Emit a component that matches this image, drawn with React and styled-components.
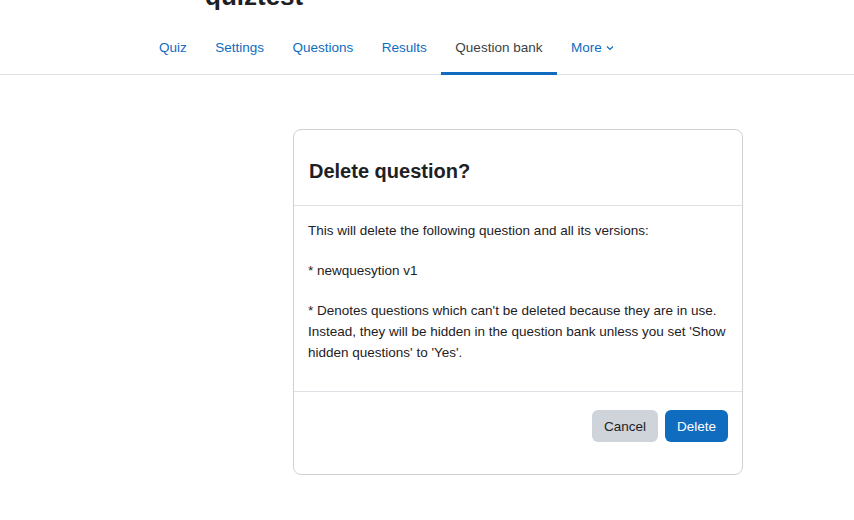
import React from 'react';
import styled, { createGlobalStyle } from 'styled-components';

const GlobalStyle = createGlobalStyle`
  html, body {
    margin: 0;
    padding: 0;
    background: #fff;
  }
  body {
    font-family: 'Liberation Sans', Arial, sans-serif;
    color: #1d2125;
    overflow: hidden;
  }
`;

const tabs = ['Quiz', 'Settings', 'Questions', 'Results', 'Question bank'];

function App() {
  return (
    <>
      <GlobalStyle />
      <Page>
        <Header>
          <Title>quiztest</Title>
        </Header>

        <Nav>
          <TabList>
            {tabs.map((t) => (
              <Tab key={t} active={t === 'Question bank'}>
                {t}
              </Tab>
            ))}
            <Tab>
              More
              <svg width='8' height='6' viewBox='0 0 8 6'>
                <path d='M1 1.5 L4 4.5 L7 1.5' fill='none' stroke='currentColor' strokeWidth='1.2' />
              </svg>
            </Tab>
          </TabList>
        </Nav>

        <Main>
          <Dialog>
            <DialogHeader>
              <DialogTitle>Delete question?</DialogTitle>
            </DialogHeader>
            <DialogBody>
              <p>This will delete the following question and all its versions:</p>
              <p>* newquesytion v1</p>
              <p>
                * Denotes questions which can't be deleted because they are in use.
                Instead, they will be hidden in the question bank unless you set 'Show
                hidden questions' to 'Yes'.
              </p>
            </DialogBody>
            <DialogFooter>
              <Button variant='secondary'>Cancel</Button>
              <Button variant='primary'>Delete</Button>
            </DialogFooter>
          </Dialog>
        </Main>
      </Page>
    </>
  );
}

const Page = styled.div`
  width: 854px;
  height: 520px;
  overflow: hidden;
`;

const Header = styled.header`
  display: flow-root;
  padding-left: 205px;
  height: 27px;
`;

const Title = styled.h1`
  margin: -19px 0 0;
  font-size: 26px;
  font-weight: 700;
  line-height: 31px;
  color: #1d2125;
`;

const Nav = styled.nav`
  border-bottom: 1px solid #dee2e6;
  padding-left: 145px;
`;

const TabList = styled.div`
  display: flex;
  margin-bottom: -1px;
`;

const Tab = styled.a`
  display: flex;
  align-items: center;
  gap: 4px;
  padding: 10px 14.25px 14px;
  font-size: 13.5px;
  line-height: 21px;
  color: ${(p) => (p.active ? '#3a3f44' : '#0f6cbf')};
  border-bottom: 3px solid ${(p) => (p.active ? '#0f6cbf' : 'transparent')};
  cursor: pointer;

  &:first-child {
    padding-left: 14px;
  }

  svg {
    margin-top: 1px;
  }
`;

const Main = styled.main`
  padding: 54px 0 0 293px;
`;

const Dialog = styled.section`
  width: 448px;
  border: 1px solid #cfd2d5;
  border-radius: 8px;
  background: #fff;
`;

const DialogHeader = styled.div`
  padding: 29px 15px 22px;
  border-bottom: 1px solid #dee2e6;
`;

const DialogTitle = styled.h5`
  margin: 0;
  font-size: 20px;
  font-weight: 700;
  line-height: 24px;
`;

const DialogBody = styled.div`
  padding: 14px 14px 14px;
  font-size: 13.5px;
  line-height: 21px;

  p {
    margin: 0 0 19px;
  }

  p:last-child {
    margin-bottom: 14px;
  }
`;

const DialogFooter = styled.div`
  display: flex;
  justify-content: flex-end;
  gap: 7px;
  padding: 18px 14px 32px;
  border-top: 1px solid #dee2e6;
`;

const Button = styled.button`
  height: 32px;
  padding: 0 12px;
  border: none;
  border-radius: 6px;
  font-family: inherit;
  font-size: 13.5px;
  background: ${(p) => (p.variant === 'primary' ? '#0f6cbf' : '#ced4da')};
  color: ${(p) => (p.variant === 'primary' ? '#fff' : '#1d2125')};
  cursor: pointer;
`;

export default App;
